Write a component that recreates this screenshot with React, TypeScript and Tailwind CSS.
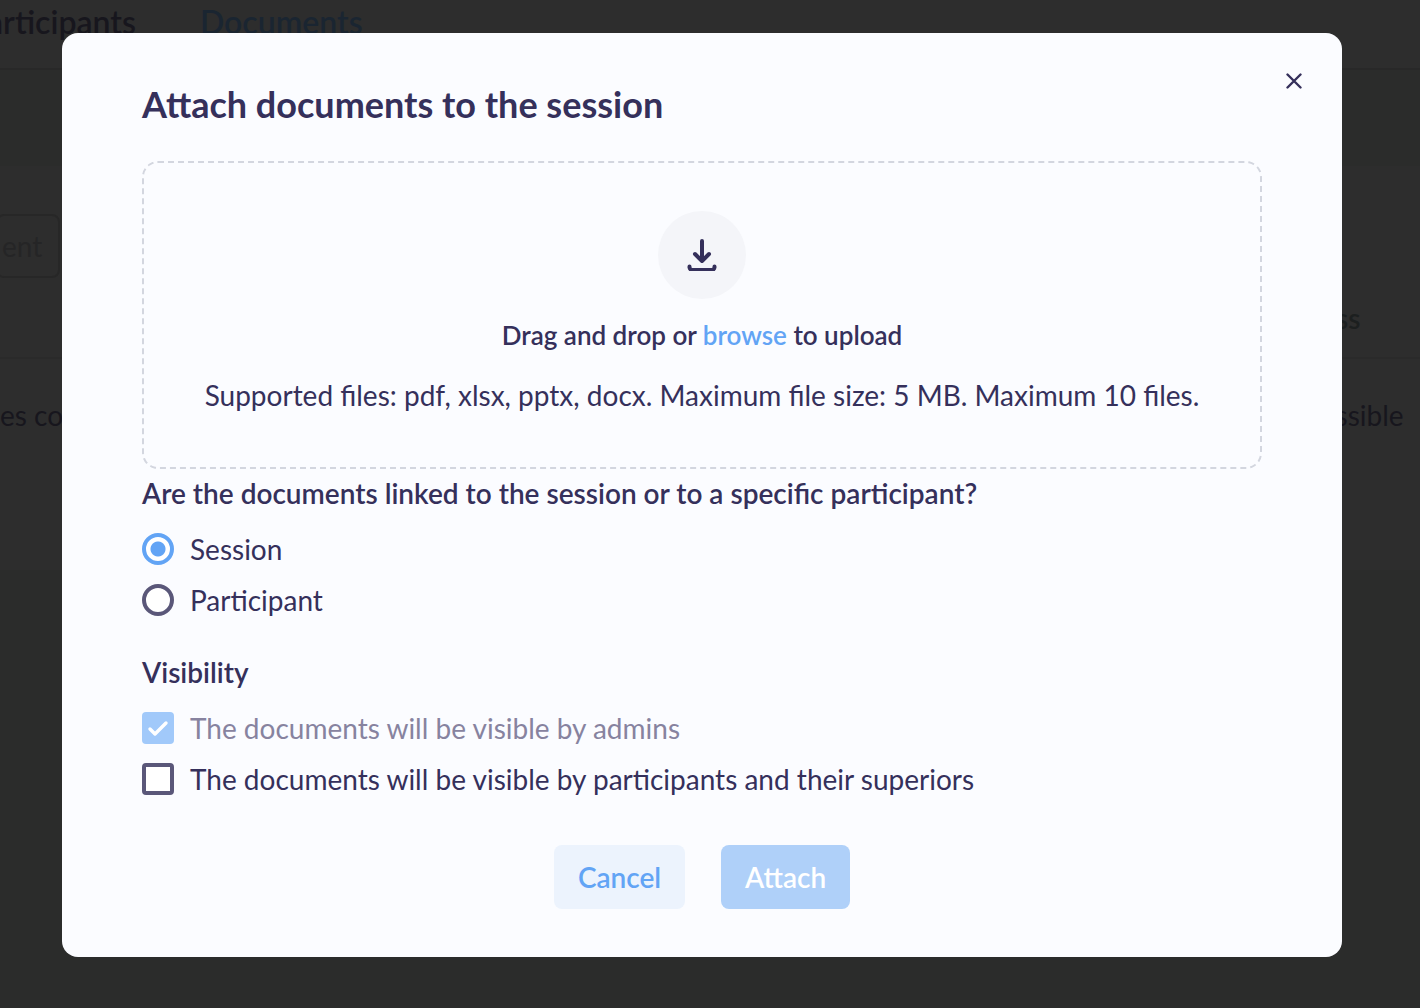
import { useState } from 'react';

function DownloadIcon() {
  return (
    <svg
      className="w-8 h-8"
      viewBox="0 0 32 32"
      fill="none"
      stroke="currentColor"
      strokeWidth="4"
      strokeLinecap="round"
      strokeLinejoin="round"
      aria-hidden="true"
    >
      <path d="M16 2v20M9 15l7 7 7-7" />
      <path d="M3.5 27.5V28.5a3 3 0 0 0 2.5 2.5h20a3 3 0 0 0 2.5-2.5V27.5" />
    </svg>
  );
}

function BackgroundPage() {
  return (
    <div className="min-h-screen bg-[#2b2c2b] overflow-hidden" aria-hidden="true">
      {/* Tabs */}
      <nav className="h-[70px] flex items-start gap-16 bg-[#2d2d2d] border-b-2 border-[#282828] text-[32px] leading-[44px] font-semibold whitespace-nowrap">
        <a href="#participants" className="-ml-8 text-[#17161d]">Participants</a>
        <a href="#documents" className="text-[#1a2531]">Documents</a>
      </nav>

      <section className="mt-24 pt-12 pb-[100px] bg-[#2d2d2d]">
        <input
          type="text"
          placeholder="ent"
          aria-label="Search document"
          className="block w-16 h-16 -ml-1 px-1 border-2 border-[#272727] rounded-lg text-[28px] placeholder:text-[#252526]"
        />

        {/* Documents table */}
        <table className="w-full text-left text-[28px] whitespace-nowrap">
          <thead>
            <tr className="h-20 border-b-2 border-[#2a2a2a] text-[#1c1f1f]">
              <th className="p-0" />
              <th className="w-36 p-0 font-semibold">Access</th>
            </tr>
          </thead>
          <tbody>
            <tr className="h-28 text-[#17161d]">
              <td className="p-0">es co</td>
              <td className="p-0">Accessible</td>
            </tr>
          </tbody>
        </table>
      </section>
    </div>
  );
}

export default function App() {
  const [target, setTarget] = useState('session');
  const [shared, setShared] = useState(false);

  const radioClass =
    'shrink-0 w-8 h-8 appearance-none rounded-full border-4 border-[#5a5779] bg-white checked:border-[#62a4f5] checked:bg-[radial-gradient(circle,#62a4f5_7px,#ffffff_8px)]';

  return (
    <div className="relative font-[Lato,sans-serif] text-[#35305b]">
      <BackgroundPage />

      <div className="absolute inset-0 flex items-start justify-center pt-[33px] pl-[62px] pr-[78px]">
        <div
          role="dialog"
          aria-modal="true"
          aria-labelledby="dialog-title"
          className="relative w-full max-w-[1280px] px-20 py-12 rounded-2xl bg-[#fbfcff]"
        >
          <button type="button" aria-label="Close" className="absolute top-8 right-8 w-8 h-8 flex items-center justify-center">
            <svg className="w-4 h-4" viewBox="0 0 16 16" fill="none" stroke="currentColor" strokeWidth="2.4" strokeLinecap="round" aria-hidden="true">
              <path d="M1.5 1.5l13 13M14.5 1.5l-13 13" />
            </svg>
          </button>

          <h1 id="dialog-title" className="text-[36px] leading-[46px] font-bold">
            Attach documents to the session
          </h1>

          {/* Drop zone */}
          <div className="mt-[34px] pt-12 pb-14 flex flex-col items-center text-center rounded-2xl border-2 border-dashed border-[#d3d6df]">
            <div className="w-[88px] h-[88px] flex items-center justify-center rounded-full bg-[#f4f5f9]">
              <DownloadIcon />
            </div>
            <p className="mt-5 text-[26px] leading-8 font-semibold">
              Drag and drop or <a href="#browse" className="text-[#62a4f5]">browse</a> to upload
            </p>
            <p className="mt-7 text-[28px] leading-8">
              Supported files: pdf, xlsx, pptx, docx. Maximum file size: 5 MB. Maximum 10 files.
            </p>
          </div>

          <fieldset className="mt-2">
            <legend className="text-[28px] leading-8 font-semibold">
              Are the documents linked to the session or to a specific participant?
            </legend>
            <div className="mt-6 flex flex-col gap-[19px] text-[28px] leading-8">
              <label className="flex items-center gap-4">
                <input
                  type="radio"
                  name="target"
                  className={radioClass}
                  checked={target === 'session'}
                  onChange={() => setTarget('session')}
                />
                Session
              </label>
              <label className="flex items-center gap-4">
                <input
                  type="radio"
                  name="target"
                  className={radioClass}
                  checked={target === 'participant'}
                  onChange={() => setTarget('participant')}
                />
                Participant
              </label>
            </div>
          </fieldset>

          <fieldset className="mt-10">
            <legend className="text-[28px] leading-8 font-semibold">Visibility</legend>
            <div className="mt-6 flex flex-col gap-[19px] text-[28px] leading-8">
              <label className="flex items-center gap-4 text-[#87839f]">
                <span className="relative shrink-0 w-8 h-8">
                  <input type="checkbox" checked disabled readOnly className="block w-8 h-8 appearance-none rounded-sm bg-[#a1c9fa]" />
                  <svg className="absolute inset-0 w-8 h-8" viewBox="0 0 32 32" fill="none" stroke="#fff" strokeWidth="3.4" strokeLinecap="round" strokeLinejoin="round" aria-hidden="true">
                    <path d="M8 17l5 5L24 11" />
                  </svg>
                </span>
                The documents will be visible by admins
              </label>
              <label className="flex items-center gap-4">
                <input
                  type="checkbox"
                  className="shrink-0 w-8 h-8 appearance-none rounded-sm border-4 border-[#5a5779] bg-white checked:bg-[#62a4f5]"
                  checked={shared}
                  onChange={(e) => setShared(e.target.checked)}
                />
                The documents will be visible by participants and their superiors
              </label>
            </div>
          </fieldset>

          {/* Actions */}
          <div className="mt-[50px] flex justify-center gap-9 text-[28px] font-semibold">
            <button type="button" className="h-16 px-6 rounded-lg bg-[#ecf3fd] text-[#62a4f5]">Cancel</button>
            <button type="button" disabled className="h-16 px-6 rounded-lg bg-[#afd0f9] text-white">Attach</button>
          </div>
        </div>
      </div>
    </div>
  );
}
